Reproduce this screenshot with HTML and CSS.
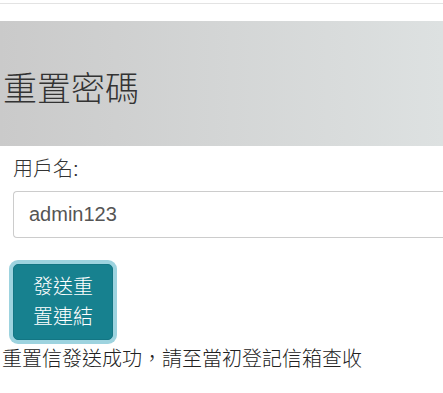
FILE: index.html
```html
<!DOCTYPE html>
<html lang="zh-Hant">
<head>
    <meta charset="UTF-8">
    <meta name="viewport" content="width=device-width, initial-scale=1.0">
    <title>重置密碼</title>
    <link rel="stylesheet" href="styles.css">
</head>
<body>
    <div class="top-line"></div>
    <header class="hero">
        <h1>重置密碼</h1>
    </header>
    <form class="reset-form">
        <label class="field-label" for="username">用戶名:</label>
        <input type="text" id="username" class="field-input" value="admin123">
        <button type="button" class="btn-send">發送重置連結</button>
    </form>
    <p class="notice">重置信發送成功，請至當初登記信箱查收</p>
</body>
</html>
```

FILE: styles.css
```css
*{
    margin    : 0;
    padding   : 0;
    box-sizing: border-box;
}

html, body{
    overflow: hidden;
}

body{
    font-family     : "Liberation Sans", "Noto Sans CJK TC", sans-serif;
    font-size       : 20px;
    line-height     : 24px;
    font-weight     : 300;
    color           : #333;
    background-color: white;
}

.top-line{
    height       : 4px;
    border-bottom: 1px solid #e3e3e3;
}

.hero{
    margin-top      : 17px;
    height          : 125px;
    padding         : 51px 0 0 3px;
    background-image: linear-gradient(to right, #cacaca, #dde1e1);
}

.hero h1{
    font-size  : 34px;
    font-weight: 300;
    line-height: 34px;
    color      : #333;
}

.reset-form{
    display       : flex;
    flex-direction: column;
    align-items   : flex-start;
    padding       : 11px 0 0 13px;
}

.field-label{
    color: #333;
}

.field-input{
    width        : 100%;
    height       : 47px;
    margin-top   : 10px;
    padding      : 0 15px;
    border       : 1px solid #ccc;
    border-right : none;
    border-radius: 4px 0 0 4px;
    font-family  : "Liberation Sans", sans-serif;
    font-size    : 20px;
    color        : #555;
    outline      : none;
}

.btn-send{
    width           : 100px;
    margin-top      : 26px;
    padding         : 7px 19px;
    border          : 1px solid #137684;
    border-radius   : 5px;
    background-color: #17818f;
    box-shadow      : 0 0 0 4px #9dd3df;
    color           : white;
    font-family     : "Liberation Sans", "Noto Sans CJK TC", sans-serif;
    font-size       : 20px;
    font-weight     : 300;
    line-height     : 30px;
    text-align      : center;
}

.notice{
    margin-top  : 7px;
    padding-left: 2px;
    color       : #222;
}
```
